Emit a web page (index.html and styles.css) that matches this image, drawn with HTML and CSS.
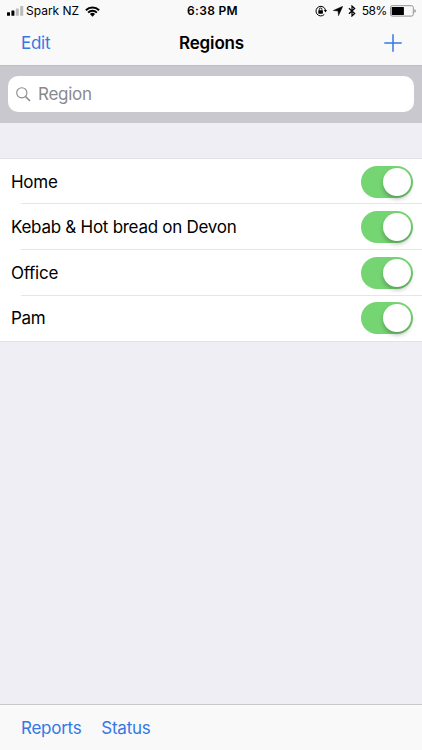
FILE: index.html
```html
<!DOCTYPE html>
<html lang="en">
<head>
    <meta charset="UTF-8">
    <title>Regions</title>
    <link rel="stylesheet" href="styles.css">
</head>
<body>
    <div class="app">
        <header class="header">
            <div class="status-bar">
                <div class="status-left">
                    <svg class="signal" width="17" height="10" viewBox="0 0 17 10">
                        <rect x="0" y="6.3" width="3" height="3.5" rx=".5" fill="#000"/>
                        <rect x="4.4" y="4.6" width="3" height="5.2" rx=".5" fill="#000"/>
                        <rect x="8.8" y="2.4" width="3" height="7.4" rx=".5" fill="#bbb"/>
                        <rect x="13.2" y="0" width="3" height="9.8" rx=".5" fill="#bbb"/>
                    </svg>
                    <span class="carrier">Spark NZ</span>
                    <svg class="wifi" width="15" height="11" viewBox="0 0 15 11">
                        <path d="M.9 4.2A9.4 9.4 0 0 1 14.1 4.2M3.1 6.6A6.2 6.2 0 0 1 11.9 6.6" fill="none" stroke="#000" stroke-width="1.9"/>
                        <path d="M4.9 8.1A3.7 3.7 0 0 1 10.1 8.1L7.5 10.7Z"/>
                    </svg>
                </div>
                <span class="time">6:38 PM</span>
                <div class="status-right">
                    <svg class="lock" width="12" height="12" viewBox="0 0 12 12">
                        <path d="M9.3 9.4A4.8 4.8 0 1 1 10.5 5.2" fill="none" stroke="#000" stroke-width="1"/>
                        <path d="M8.8 5H12L10.5 7.4Z"/>
                        <rect x="3.3" y="5.3" width="4.6" height="3.4" rx=".4"/>
                        <path d="M4.3 5.5V4.3a1.3 1.3 0 0 1 2.6 0V5.5" fill="none" stroke="#000" stroke-width=".9"/>
                    </svg>
                    <svg class="location" width="10" height="10" viewBox="0 0 10 10">
                        <path d="M9.8.2L5.5 9.8 5 5 .2 4.5Z" stroke="#000" stroke-width=".4"/>
                    </svg>
                    <svg class="bluetooth" width="8" height="12" viewBox="0 0 8 12">
                        <path d="M.9 3.2L6.7 8.5 4 11V1L6.7 3.5.9 8.8" fill="none" stroke="#000" stroke-width="1.2"/>
                    </svg>
                    <span class="percent">58%</span>
                    <svg class="battery" width="26" height="12" viewBox="0 0 26 12">
                        <rect x=".5" y=".7" width="22.8" height="10.4" rx="1.8" fill="none" stroke="#888" stroke-width=".9"/>
                        <rect x="1.7" y="1.9" width="12.2" height="8" rx=".5"/>
                        <path d="M24.4 4q1.5.4 1.5 1.9t-1.5 1.9Z" fill="#999"/>
                    </svg>
                </div>
            </div>
            <nav class="nav-bar">
                <a class="edit">Edit</a>
                <h1>Regions</h1>
                <svg class="add" width="18" height="18" viewBox="0 0 18 18">
                    <path d="M9 .3V17.7M.3 9H17.7" stroke="#3478e5" stroke-width="1.5"/>
                </svg>
            </nav>
        </header>

        <div class="search-bar">
            <div class="search-field">
                <svg width="15" height="15" viewBox="0 0 15 15" fill="none" stroke="#8a8a8e">
                    <circle cx="5.8" cy="5.8" r="5.1" stroke-width="1.1"/>
                    <path d="M9.5 9.5L14 14" stroke-width="1.6"/>
                </svg>
                <span>Region</span>
            </div>
        </div>

        <main class="content">
            <ul class="region-list">
                <li class="region"><span>Home</span><span class="toggle"></span></li>
                <li class="region"><span>Kebab &amp; Hot bread on Devon</span><span class="toggle"></span></li>
                <li class="region"><span>Office</span><span class="toggle"></span></li>
                <li class="region"><span>Pam</span><span class="toggle"></span></li>
            </ul>
        </main>

        <footer class="toolbar">
            <a>Reports</a>
            <a>Status</a>
        </footer>
    </div>
</body>
</html>
```
FILE: styles.css
```css
* {
    margin: 0;
    padding: 0;
    box-sizing: border-box;
}

body {
    font-family: Inter, "Liberation Sans", sans-serif;
    font-size: 17px;
    letter-spacing: -0.27px;
    color: #000;
    background: #efeef4;
}

svg {
    display: block;
    flex: none;
}

.app {
    height: 750px;
    display: flex;
    flex-direction: column;
    overflow: hidden;
}

.header {
    height: 65px;
    background: #f9f9f9;
}

/* status bar */
.status-bar {
    height: 22px;
    display: grid;
    grid-template-columns: 1fr auto 1fr;
    align-items: center;
    padding: 0 6px 0 7px;
    font-size: 12px;
    line-height: 22px;
}

.status-left,
.status-right {
    display: flex;
    align-items: center;
}

.status-right {
    justify-content: flex-end;
}

.carrier {
    margin-left: 2px;
    letter-spacing: 0;
}

.wifi {
    margin-left: 6px;
}

.time {
    font-weight: 600;
    letter-spacing: 0.3px;
    padding-left: 2px;
}

.location {
    margin-left: 6px;
}

.bluetooth {
    margin-left: 5px;
}

.percent {
    margin: 0 3px 0 6px;
    letter-spacing: -0.4px;
}

/* navigation bar */
.nav-bar {
    height: 42px;
    display: grid;
    grid-template-columns: 1fr auto 1fr;
    align-items: center;
    padding: 0 20px 0 21px;
}

.nav-bar h1 {
    font-size: 17px;
    font-weight: 600;
    letter-spacing: -0.15px;
}

.edit,
.toolbar a {
    color: #3478e5;
}

.add {
    justify-self: end;
}

/* search */
.search-bar {
    height: 58px;
    padding: 10px 8px 0;
    background: #c9c8ce;
    border-top: 1px solid #bfbfc2;
}

.search-field {
    height: 36px;
    display: flex;
    align-items: center;
    gap: 7px;
    padding-left: 8px;
    background: #fff;
    border-radius: 10px;
    color: #8a8a8e;
}

/* region list */
.content {
    flex: 1;
    padding-top: 35px;
}

.region-list {
    list-style: none;
    background: #fff;
    border-top: 1px solid #e2e1e6;
    border-bottom: 1px solid #e2e1e6;
}

.region {
    height: 45.75px;
    display: flex;
    align-items: center;
    justify-content: space-between;
    padding: 0 9px 0 11px;
    background: linear-gradient(#e6e6e9, #e6e6e9) 21px 100% / 100% 1px no-repeat;
}

.region:first-child {
    height: 45px;
}

.region:last-child {
    background: none;
}

.toggle {
    width: 52px;
    height: 32px;
    padding: 2px;
    border-radius: 16px;
    background: #75d572;
}

.toggle::after {
    content: "";
    display: block;
    width: 28px;
    height: 28px;
    margin-left: auto;
    border-radius: 50%;
    background: #fff;
    box-shadow: 0 3px 4px rgba(0, 0, 0, 0.25);
}

/* bottom toolbar */
.toolbar {
    height: 46px;
    display: flex;
    align-items: center;
    gap: 20px;
    padding-left: 21px;
    background: #f9f9f9;
    border-top: 1px solid #c8c8cc;
}
```
